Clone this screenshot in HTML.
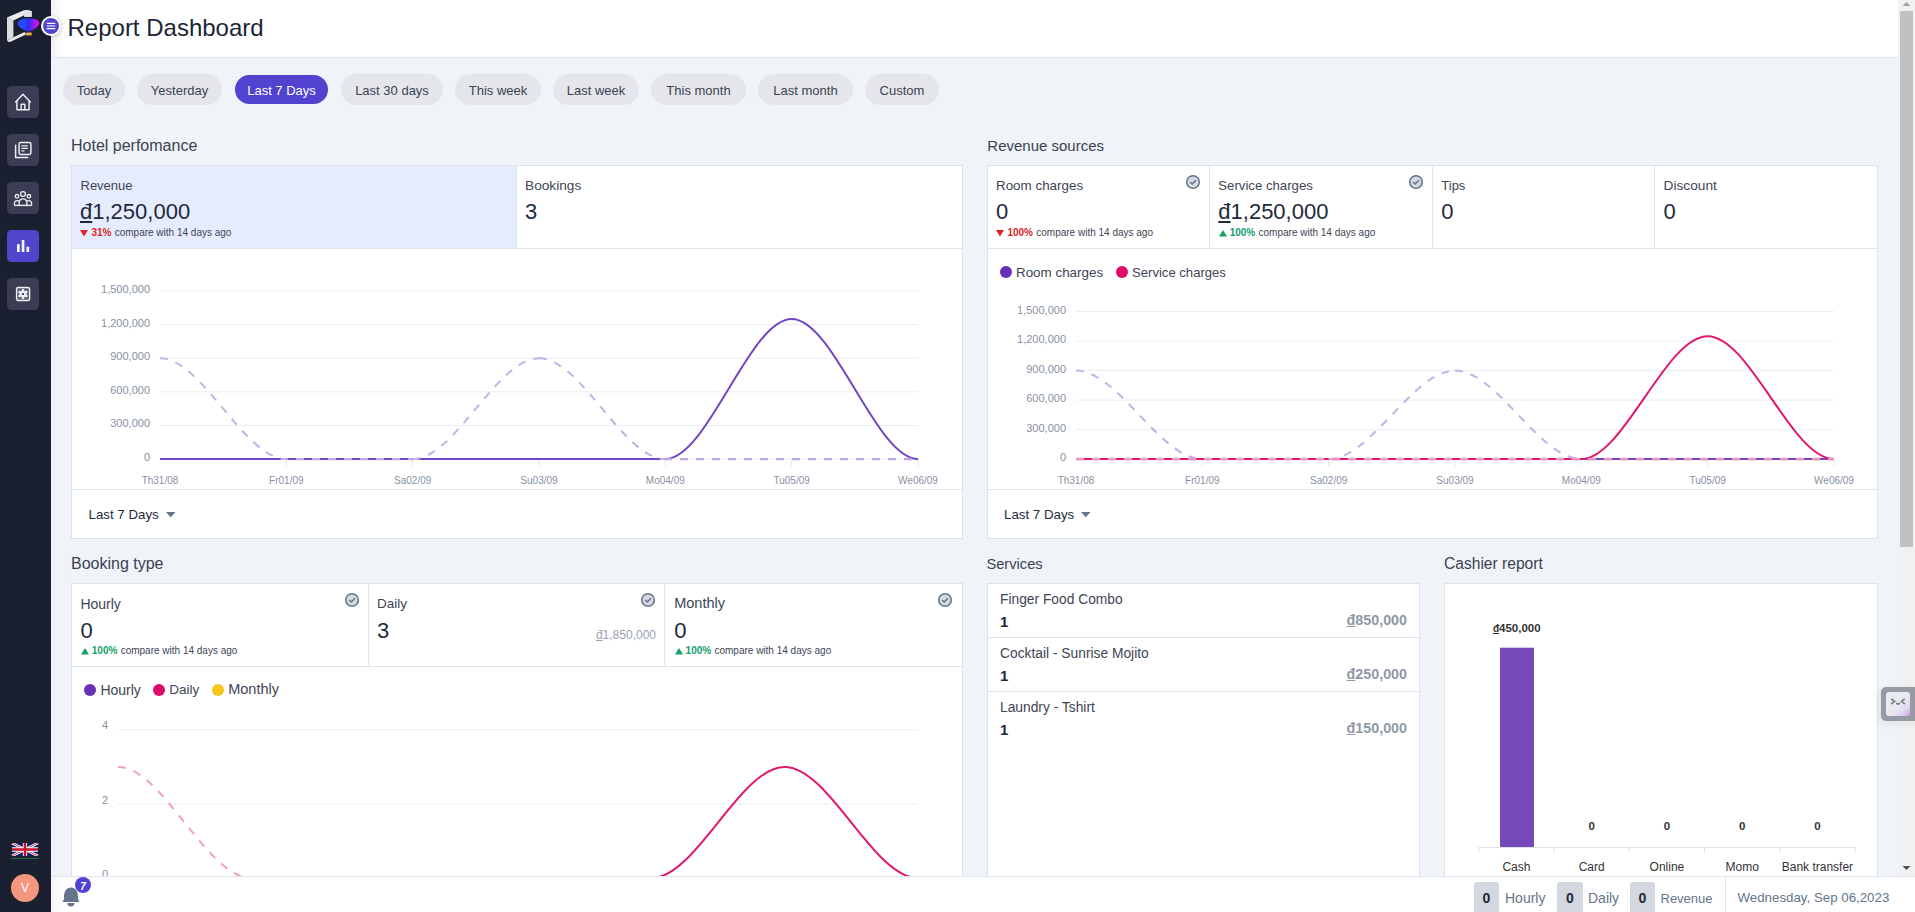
<!DOCTYPE html><html><head><meta charset="utf-8"><style>
*{box-sizing:border-box;margin:0;padding:0}
html,body{width:1915px;height:912px;overflow:hidden;background:#f0f3f8;font-family:"Liberation Sans",sans-serif;color:#374151}
.a{position:absolute}
#sb{left:0;top:0;width:51px;height:912px;background:#1b2030}
.nb{position:absolute;left:7px;width:32px;height:32px;border-radius:4.5px;background:#3b3d54}
.nb.act{background:#5144cd}
.nb svg{position:absolute;left:0;top:0}
#hd{left:51px;top:0;width:1847px;height:58px;background:#fff;border-bottom:1px solid #dfe5ee}
#title{left:68px;top:13px;font-size:24px;color:#1d2636;white-space:nowrap}
.pill{position:absolute;top:74px;height:31px;border-radius:16px;background:#e4e6eb;color:#3b4351;font-size:13px;line-height:33px;text-align:center;white-space:nowrap}
.pill.act{background:#5143cf;color:#fff;top:75px;height:29px;line-height:31px}
.st{position:absolute;font-size:16px;color:#3a4252;white-space:nowrap}
.card{position:absolute;background:#fff;border:1px solid #dde3ee}
.cell{position:absolute;top:0;height:83px;border-right:1px solid #dde3ee}
.lbl{position:absolute;font-size:13.5px;color:#3d4555;white-space:nowrap}
.val{position:absolute;font-size:22px;color:#1e293b;white-space:nowrap}
.cmp{position:absolute;font-size:10px;color:#3d4555;white-space:nowrap}
.cmp b.r{color:#dc2626}
.cmp b.g{color:#13a067}
.chk{position:absolute;width:14px;height:14px}
#ft{left:51px;top:876px;width:1864px;height:36px;background:#fff;border-top:1px solid #dfe5ee}
#scr{left:1898px;top:0;width:17px;height:876px;background:#f1f1f1}
.t{position:absolute;line-height:1;white-space:nowrap}
u.d{text-decoration:underline;text-decoration-thickness:0.07em;text-underline-offset:0.1em;text-decoration-skip-ink:none}
</style></head><body>


<!-- SIDEBAR -->
<div id="sb" class="a">
 <!-- logo -->
 <svg class="a" style="left:0;top:0" width="51" height="50" viewBox="0 0 51 50">
  <defs>
   <linearGradient id="bal" x1="0" x2="1" y1="0" y2="0">
    <stop offset="0" stop-color="#3a3cff"/><stop offset="0.3" stop-color="#1f4cff"/><stop offset="0.5" stop-color="#2b2cf5"/><stop offset="0.72" stop-color="#8a1cf0"/><stop offset="1" stop-color="#f010f0"/>
   </linearGradient>
  </defs>
  <path d="M7 17.6 L13.4 20.6 L13.4 37.2 L7 40.2 Z" fill="#dcdcdf"/>
  <path d="M7 17.6 L24 10.2 Q28 9.6 31.6 11 L31.6 16.8 L24.2 16.8 L24.2 15.2 L13.4 20.6 Z" fill="#ececee"/>
  <path d="M24.2 11.5 L31.6 11 L31.6 16.8 L24.2 16.8 Z" fill="#e2e2e5"/>
  <path d="M7 40.2 L13.4 37.2 L24.6 32 L26 34.6 L10.5 41.8 Q8 42.6 7 40.2 Z" fill="#e8e8ea"/>
  <path d="M17.6 23.6 C17.6 19.8 23 18.6 28.5 18.6 C34.5 18.6 39.2 20 39.2 23.2 C39.2 26.2 33.5 30 28.5 31.6 C23.5 30.2 17.6 27 17.6 23.6 Z" fill="url(#bal)"/>
  <rect x="25.8" y="32.6" width="6" height="2.8" rx="0.8" fill="#f0a545"/>
 </svg>
 <!-- nav buttons -->
 <div class="nb" style="top:86px"><svg width="32" height="32" viewBox="0 0 32 32" fill="none" stroke="#eceef3" stroke-width="1.45" stroke-linejoin="round" stroke-linecap="round">
  <path d="M8.6 15.9 L16 8.3 L23.4 15.9"/><path d="M9.9 14.6 V23.5 Q9.9 23.7 10.2 23.7 H21.8 Q22.1 23.7 22.1 23.5 V14.6"/><path d="M14.2 23.6 V18.2 H17.8 V23.6"/></svg></div>
 <div class="nb" style="top:134px"><svg width="32" height="32" viewBox="0 0 32 32" fill="none" stroke="#eceef3" stroke-width="1.5" stroke-linecap="round">
  <path d="M8.6 11.3 V23.6 H20.7"/><rect x="12.1" y="8.4" width="11.8" height="12" rx="1.6"/><path d="M14.4 11.8 H20.8 M14.4 14.4 H20.8 M14.4 16.9 H17.4" stroke-width="1.25" stroke-linecap="butt"/></svg></div>
 <div class="nb" style="top:182px"><svg width="32" height="32" viewBox="0 0 32 32" fill="none" stroke="#eceef3" stroke-width="1.3">
  <circle cx="16" cy="12" r="2.4"/><circle cx="10" cy="14.3" r="1.8"/><circle cx="21.9" cy="14.3" r="1.8"/>
  <path d="M12.1 23 V21.5 Q12.1 16.9 16 16.9 Q19.9 16.9 19.9 21.5 V23"/><path d="M7.4 23.3 V22 Q7.4 18.6 10.2 18.6 Q11.6 18.6 12.3 19.5 M24.6 23.3 V22 Q24.6 18.6 21.8 18.6 Q20.4 18.6 19.7 19.5"/><path d="M7.3 23.4 H24.7" stroke-width="1.4"/></svg></div>
 <div class="nb act" style="top:230px"><svg width="32" height="32" viewBox="0 0 32 32" fill="#f4f4fb">
  <rect x="10" y="14.2" width="2.7" height="7.8"/><rect x="14.7" y="10" width="2.7" height="12"/><rect x="19.5" y="16.7" width="2.7" height="5.3"/></svg></div>
 <div class="nb" style="top:278px"><svg width="32" height="32" viewBox="0 0 32 32">
  <rect x="9.6" y="9.5" width="13" height="13" rx="1.5" fill="rgba(255,255,255,0.17)" stroke="#eceef3" stroke-width="1.4"/>
  <g fill="#eceef3"><circle cx="16" cy="16" r="3.6"/><rect x="14.9" y="10.9" width="2.2" height="3" rx="0.4" transform="rotate(0 16 16)"/><rect x="14.9" y="10.9" width="2.2" height="3" rx="0.4" transform="rotate(60 16 16)"/><rect x="14.9" y="10.9" width="2.2" height="3" rx="0.4" transform="rotate(120 16 16)"/><rect x="14.9" y="10.9" width="2.2" height="3" rx="0.4" transform="rotate(180 16 16)"/><rect x="14.9" y="10.9" width="2.2" height="3" rx="0.4" transform="rotate(240 16 16)"/><rect x="14.9" y="10.9" width="2.2" height="3" rx="0.4" transform="rotate(300 16 16)"/></g><circle cx="16" cy="16" r="1.1" fill="#1b2030"/></svg></div>
 <!-- flag -->
 <svg class="a" style="left:11px;top:843px" width="28" height="13" viewBox="0 0 60 30">
  <rect width="60" height="30" fill="#012169"/>
  <path d="M0 0 L60 30 M60 0 L0 30" stroke="#fff" stroke-width="6"/>
  <path d="M0 0 L60 30 M60 0 L0 30" stroke="#C8102E" stroke-width="2"/>
  <path d="M30 0 V30 M0 15 H60" stroke="#fff" stroke-width="10"/>
  <path d="M30 0 V30 M0 15 H60" stroke="#C8102E" stroke-width="6"/>
 </svg>
 <div class="a" style="left:11px;top:858px;width:28px;height:1px;background:#1f6f3a"></div>
 <!-- avatar -->
 <div class="a" style="left:11px;top:874px;width:28px;height:28px;border-radius:50%;background:#f5977f;color:#fff;font-size:12px;line-height:28px;text-align:center">V</div>
</div>
<!-- menu toggle -->
<div class="a" style="z-index:5;left:41px;top:16px;width:20px;height:20px;border-radius:50%;background:#5144cd;border:2px solid #fff;box-shadow:0 1px 4px rgba(0,0,0,.25)">
 <svg class="a" style="left:0;top:0" width="16" height="16" viewBox="0 0 16 16" stroke="#fff" stroke-width="1.1"><path d="M3.7 5.4 H12.3 M3.7 8 H12.3 M3.7 10.6 H12.3"/></svg>
</div>


<div id="hd" class="a"></div>
<div class="a" style="left:51px;top:0;width:14px;height:57px;background:linear-gradient(90deg,rgba(0,0,0,.05),rgba(0,0,0,0))"></div>
<div class="t" style="left:67.50px;top:16.40px;font-size:24.00px;color:#1d2636;">Report Dashboard</div>
<div class="pill" style="left:63px;width:62px">Today</div>
<div class="pill" style="left:137px;width:85px">Yesterday</div>
<div class="pill act" style="left:235px;width:93px">Last 7 Days</div>
<div class="pill" style="left:341px;width:102px">Last 30 days</div>
<div class="pill" style="left:455px;width:86px">This week</div>
<div class="pill" style="left:553px;width:86px">Last week</div>
<div class="pill" style="left:651px;width:95px">This month</div>
<div class="pill" style="left:758px;width:95px">Last month</div>
<div class="pill" style="left:865px;width:74px">Custom</div>
<div class="t" style="left:71.00px;top:138.40px;font-size:16.00px;color:#3a4252;">Hotel perfomance</div>
<div class="t" style="left:987.30px;top:138.45px;font-size:15.00px;color:#3a4252;">Revenue sources</div>
<div class="t" style="left:71.00px;top:555.60px;font-size:16.00px;color:#3a4252;">Booking type</div>
<div class="t" style="left:986.40px;top:556.71px;font-size:14.70px;color:#3a4252;">Services</div>
<div class="t" style="left:1444.00px;top:555.94px;font-size:15.60px;color:#3a4252;">Cashier report</div>
<div class="card" style="left:71px;top:165px;width:892px;height:374px"></div>
<div class="card" style="left:987px;top:165px;width:891px;height:374px"></div>
<div class="card" style="left:71px;top:583px;width:892px;height:417px"></div>
<div class="card" style="left:987px;top:583px;width:433px;height:417px"></div>
<div class="card" style="left:1444px;top:583px;width:434px;height:417px"></div>
<div class="a" style="left:72.00px;top:166.00px;width:444.00px;height:82.00px;background:#e6ecfd;"></div>
<div class="a" style="left:516.00px;top:166.00px;width:1.00px;height:82.00px;background:#dde3ee;"></div>
<div class="a" style="left:72.00px;top:248.00px;width:890.00px;height:1.00px;background:#dde3ee;"></div>
<div class="t" style="left:80.50px;top:179.35px;font-size:13.00px;color:#3d4555;">Revenue</div>
<div class="t" style="left:80.00px;top:201.10px;font-size:22.00px;color:#1e293b;"><u class=d>đ</u>1,250,000</div>
<svg class="a" style="left:80.3px;top:229.7px" width="8" height="7" viewBox="0 0 8 7"><path d="M0 0 L8 0 L4 6.5 Z" fill="#dc2626"/></svg>
<div class="t" style="left:91.4px;top:228.00px;font-size:10px;color:#3d4555"><b style="color:#dc2626">31%</b> <span style="margin-left:0.5px">compare with 14 days ago</span></div>
<div class="t" style="left:525.00px;top:178.75px;font-size:13.70px;color:#3d4555;">Bookings</div>
<div class="t" style="left:525.00px;top:201.30px;font-size:22.00px;color:#1e293b;">3</div>
<div class="a" style="left:72.00px;top:489.00px;width:890.00px;height:1.00px;background:#dde3ee;"></div>
<div class="t" style="left:88.50px;top:507.69px;font-size:13.30px;color:#1e293b;">Last 7 Days</div>
<svg class="a" style="left:165.8px;top:511.8px" width="10" height="6" viewBox="0 0 10 6"><path d="M0 0 H9.5 L4.75 5.2 Z" fill="#64748b"/></svg>
<div class="a" style="left:1209.00px;top:166.00px;width:1.00px;height:82.00px;background:#dde3ee;"></div>
<div class="a" style="left:1432.00px;top:166.00px;width:1.00px;height:82.00px;background:#dde3ee;"></div>
<div class="a" style="left:1654.00px;top:166.00px;width:1.00px;height:82.00px;background:#dde3ee;"></div>
<div class="a" style="left:988.00px;top:248.00px;width:889.00px;height:1.00px;background:#dde3ee;"></div>
<div class="t" style="left:996.00px;top:178.81px;font-size:13.40px;color:#3d4555;">Room charges</div>
<div class="t" style="left:996.00px;top:200.90px;font-size:22.00px;color:#1e293b;">0</div>
<svg class="a" style="left:996.3px;top:229.7px" width="8" height="7" viewBox="0 0 8 7"><path d="M0 0 L8 0 L4 6.5 Z" fill="#dc2626"/></svg>
<div class="t" style="left:1007.4px;top:228.00px;font-size:10px;color:#3d4555"><b style="color:#dc2626">100%</b> <span style="margin-left:0.5px">compare with 14 days ago</span></div>
<svg class="a" style="left:1185.0px;top:174.0px" width="16" height="16" viewBox="0 0 16 16"><circle cx="8" cy="8" r="6.3" fill="#d3d8e1" stroke="#64728a" stroke-width="1.5"/><path d="M5.2 8.1 L7.2 10.1 L10.9 6.2" fill="none" stroke="#64728a" stroke-width="1.4"/></svg>
<div class="t" style="left:1218.30px;top:178.98px;font-size:13.20px;color:#3d4555;">Service charges</div>
<div class="t" style="left:1218.30px;top:200.90px;font-size:22.00px;color:#1e293b;"><u class=d>đ</u>1,250,000</div>
<svg class="a" style="left:1218.6px;top:229.7px" width="8" height="7" viewBox="0 0 8 7"><path d="M0 6.5 L4 0 L8 6.5 Z" fill="#13a067"/></svg>
<div class="t" style="left:1229.7px;top:228.00px;font-size:10px;color:#3d4555"><b style="color:#13a067">100%</b> <span style="margin-left:0.5px">compare with 14 days ago</span></div>
<svg class="a" style="left:1408.0px;top:174.0px" width="16" height="16" viewBox="0 0 16 16"><circle cx="8" cy="8" r="6.3" fill="#d3d8e1" stroke="#64728a" stroke-width="1.5"/><path d="M5.2 8.1 L7.2 10.1 L10.9 6.2" fill="none" stroke="#64728a" stroke-width="1.4"/></svg>
<div class="t" style="left:1441.30px;top:179.15px;font-size:13.00px;color:#3d4555;">Tips</div>
<div class="t" style="left:1441.30px;top:200.90px;font-size:22.00px;color:#1e293b;">0</div>
<div class="t" style="left:1663.60px;top:178.55px;font-size:13.70px;color:#3d4555;">Discount</div>
<div class="t" style="left:1663.60px;top:200.90px;font-size:22.00px;color:#1e293b;">0</div>
<div class="a" style="left:1000.0px;top:266.2px;width:12px;height:12px;border-radius:50%;background:#6a2fb8"></div>
<div class="t" style="left:1016.00px;top:265.61px;font-size:13.40px;color:#3d4555;">Room charges</div>
<div class="a" style="left:1115.7px;top:266.2px;width:12px;height:12px;border-radius:50%;background:#dd0b6a"></div>
<div class="t" style="left:1132.00px;top:265.87px;font-size:13.10px;color:#3d4555;">Service charges</div>
<div class="a" style="left:988.00px;top:489.00px;width:889.00px;height:1.00px;background:#dde3ee;"></div>
<div class="t" style="left:1004.00px;top:507.69px;font-size:13.30px;color:#1e293b;">Last 7 Days</div>
<svg class="a" style="left:1081.3px;top:511.8px" width="10" height="6" viewBox="0 0 10 6"><path d="M0 0 H9.5 L4.75 5.2 Z" fill="#64748b"/></svg>
<div class="a" style="left:368.00px;top:584.00px;width:1.00px;height:82.00px;background:#dde3ee;"></div>
<div class="a" style="left:664.00px;top:584.00px;width:1.00px;height:82.00px;background:#dde3ee;"></div>
<div class="a" style="left:72.00px;top:666.00px;width:890.00px;height:1.00px;background:#dde3ee;"></div>
<div class="t" style="left:80.40px;top:596.50px;font-size:14.00px;color:#3d4555;">Hourly</div>
<div class="t" style="left:80.40px;top:619.50px;font-size:22.00px;color:#1e293b;">0</div>
<svg class="a" style="left:80.7px;top:648.0px" width="8" height="7" viewBox="0 0 8 7"><path d="M0 6.5 L4 0 L8 6.5 Z" fill="#13a067"/></svg>
<div class="t" style="left:91.8px;top:646.30px;font-size:10px;color:#3d4555"><b style="color:#13a067">100%</b> <span style="margin-left:0.5px">compare with 14 days ago</span></div>
<svg class="a" style="left:344.0px;top:592.0px" width="16" height="16" viewBox="0 0 16 16"><circle cx="8" cy="8" r="6.3" fill="#d3d8e1" stroke="#64728a" stroke-width="1.5"/><path d="M5.2 8.1 L7.2 10.1 L10.9 6.2" fill="none" stroke="#64728a" stroke-width="1.4"/></svg>
<div class="t" style="left:377.00px;top:596.92px;font-size:13.50px;color:#3d4555;">Daily</div>
<div class="t" style="left:377.00px;top:619.50px;font-size:22.00px;color:#1e293b;">3</div>
<div class="t" style="right:1259.00px;top:629.00px;font-size:12.00px;color:#9aa2b1;"><u class=d>đ</u>1,850,000</div>
<svg class="a" style="left:640.0px;top:592.0px" width="16" height="16" viewBox="0 0 16 16"><circle cx="8" cy="8" r="6.3" fill="#d3d8e1" stroke="#64728a" stroke-width="1.5"/><path d="M5.2 8.1 L7.2 10.1 L10.9 6.2" fill="none" stroke="#64728a" stroke-width="1.4"/></svg>
<div class="t" style="left:674.20px;top:596.07px;font-size:14.50px;color:#3d4555;">Monthly</div>
<div class="t" style="left:674.20px;top:619.50px;font-size:22.00px;color:#1e293b;">0</div>
<svg class="a" style="left:674.5px;top:648.0px" width="8" height="7" viewBox="0 0 8 7"><path d="M0 6.5 L4 0 L8 6.5 Z" fill="#13a067"/></svg>
<div class="t" style="left:685.6px;top:646.30px;font-size:10px;color:#3d4555"><b style="color:#13a067">100%</b> <span style="margin-left:0.5px">compare with 14 days ago</span></div>
<svg class="a" style="left:937.0px;top:592.0px" width="16" height="16" viewBox="0 0 16 16"><circle cx="8" cy="8" r="6.3" fill="#d3d8e1" stroke="#64728a" stroke-width="1.5"/><path d="M5.2 8.1 L7.2 10.1 L10.9 6.2" fill="none" stroke="#64728a" stroke-width="1.4"/></svg>
<div class="a" style="left:83.8px;top:684.0px;width:12px;height:12px;border-radius:50%;background:#6a2fb8"></div>
<div class="t" style="left:100.40px;top:682.90px;font-size:14.00px;color:#3d4555;">Hourly</div>
<div class="a" style="left:152.5px;top:684.0px;width:12px;height:12px;border-radius:50%;background:#dd0b6a"></div>
<div class="t" style="left:169.30px;top:683.32px;font-size:13.50px;color:#3d4555;">Daily</div>
<div class="a" style="left:211.8px;top:684.0px;width:12px;height:12px;border-radius:50%;background:#f5c518"></div>
<div class="t" style="left:228.20px;top:682.47px;font-size:14.50px;color:#3d4555;">Monthly</div>
<div class="t" style="left:1000.00px;top:593.07px;font-size:13.80px;color:#3d4555;">Finger Food Combo</div>
<div class="t" style="left:1000.00px;top:614.15px;font-size:15.00px;color:#1e293b;font-weight:bold;">1</div>
<div class="t" style="right:508.00px;top:613.35px;font-size:14.30px;color:#8f98a8;font-weight:bold;"><u class=d>đ</u>850,000</div>
<div class="a" style="left:988.00px;top:637.00px;width:431.00px;height:1.00px;background:#dde3ee;"></div>
<div class="t" style="left:1000.00px;top:647.07px;font-size:13.80px;color:#3d4555;">Cocktail - Sunrise Mojito</div>
<div class="t" style="left:1000.00px;top:668.15px;font-size:15.00px;color:#1e293b;font-weight:bold;">1</div>
<div class="t" style="right:508.00px;top:667.35px;font-size:14.30px;color:#8f98a8;font-weight:bold;"><u class=d>đ</u>250,000</div>
<div class="a" style="left:988.00px;top:691.00px;width:431.00px;height:1.00px;background:#dde3ee;"></div>
<div class="t" style="left:1000.00px;top:701.07px;font-size:13.80px;color:#3d4555;">Laundry - Tshirt</div>
<div class="t" style="left:1000.00px;top:722.15px;font-size:15.00px;color:#1e293b;font-weight:bold;">1</div>
<div class="t" style="right:508.00px;top:721.35px;font-size:14.30px;color:#8f98a8;font-weight:bold;"><u class=d>đ</u>150,000</div>
<svg class="a" style="left:0;top:0" width="1915" height="912" viewBox="0 0 1915 912" font-family="Liberation Sans, sans-serif"><line x1="160.0" y1="459.10" x2="918.0" y2="459.10" stroke="#e9edf3" stroke-width="1"/><text x="150.0" y="461.00" font-size="11" fill="#8891a1" text-anchor="end">0</text><line x1="160.0" y1="425.48" x2="918.0" y2="425.48" stroke="#e9edf3" stroke-width="1"/><text x="150.0" y="427.38" font-size="11" fill="#8891a1" text-anchor="end">300,000</text><line x1="160.0" y1="391.86" x2="918.0" y2="391.86" stroke="#e9edf3" stroke-width="1"/><text x="150.0" y="393.76" font-size="11" fill="#8891a1" text-anchor="end">600,000</text><line x1="160.0" y1="358.24" x2="918.0" y2="358.24" stroke="#e9edf3" stroke-width="1"/><text x="150.0" y="360.14" font-size="11" fill="#8891a1" text-anchor="end">900,000</text><line x1="160.0" y1="324.62" x2="918.0" y2="324.62" stroke="#e9edf3" stroke-width="1"/><text x="150.0" y="326.52" font-size="11" fill="#8891a1" text-anchor="end">1,200,000</text><line x1="160.0" y1="291.00" x2="918.0" y2="291.00" stroke="#e9edf3" stroke-width="1"/><text x="150.0" y="292.90" font-size="11" fill="#8891a1" text-anchor="end">1,500,000</text><text x="160.00" y="483.60" font-size="10" fill="#8891a1" text-anchor="middle">Th31/08</text><line x1="286.33" y1="459.1" x2="286.33" y2="466.1" stroke="#e2e6ec" stroke-width="1"/><text x="286.33" y="483.60" font-size="10" fill="#8891a1" text-anchor="middle">Fr01/09</text><line x1="412.67" y1="459.1" x2="412.67" y2="466.1" stroke="#e2e6ec" stroke-width="1"/><text x="412.67" y="483.60" font-size="10" fill="#8891a1" text-anchor="middle">Sa02/09</text><line x1="539.00" y1="459.1" x2="539.00" y2="466.1" stroke="#e2e6ec" stroke-width="1"/><text x="539.00" y="483.60" font-size="10" fill="#8891a1" text-anchor="middle">Su03/09</text><line x1="665.33" y1="459.1" x2="665.33" y2="466.1" stroke="#e2e6ec" stroke-width="1"/><text x="665.33" y="483.60" font-size="10" fill="#8891a1" text-anchor="middle">Mo04/09</text><line x1="791.67" y1="459.1" x2="791.67" y2="466.1" stroke="#e2e6ec" stroke-width="1"/><text x="791.67" y="483.60" font-size="10" fill="#8891a1" text-anchor="middle">Tu05/09</text><line x1="918.00" y1="459.1" x2="918.00" y2="466.1" stroke="#e2e6ec" stroke-width="1"/><text x="918.00" y="483.60" font-size="10" fill="#8891a1" text-anchor="middle">We06/09</text><path d="M160.00 459.10 C202.11 459.10 244.22 459.10 286.33 459.10 C328.44 459.10 370.56 459.10 412.67 459.10 C454.78 459.10 496.89 459.10 539.00 459.10 C581.11 459.10 623.22 459.10 665.33 459.10 C707.44 459.10 749.56 319.02 791.67 319.02 C833.78 319.02 875.89 459.10 918.00 459.10" fill="none" stroke="#7246c2" stroke-width="2"/><path d="M160.00 358.24 C202.11 358.24 244.22 459.10 286.33 459.10" fill="none" stroke="#c5b0e8" stroke-width="2" stroke-dasharray="8 8"/><path d="M286.33 459.10 H412.67" fill="none" stroke="#bca5e4" stroke-width="2.4" stroke-dasharray="8 8" stroke-dashoffset="6.33"/><path d="M412.67 459.10 C454.78 459.10 496.89 358.24 539.00 358.24" fill="none" stroke="#c5b0e8" stroke-width="2" stroke-dasharray="8 8"/><path d="M539.00 358.24 C581.11 358.24 623.22 459.10 665.33 459.10" fill="none" stroke="#c5b0e8" stroke-width="2" stroke-dasharray="8 8"/><path d="M665.33 459.10 H791.67" fill="none" stroke="#bca5e4" stroke-width="2.4" stroke-dasharray="8 8" stroke-dashoffset="1.33"/><path d="M791.67 459.10 H918.00" fill="none" stroke="#bca5e4" stroke-width="2.4" stroke-dasharray="8 8" stroke-dashoffset="15.67"/></svg>
<svg class="a" style="left:0;top:0" width="1915" height="912" viewBox="0 0 1915 912" font-family="Liberation Sans, sans-serif"><line x1="1076.0" y1="459.10" x2="1834.0" y2="459.10" stroke="#e9edf3" stroke-width="1"/><text x="1066.0" y="461.00" font-size="11" fill="#8891a1" text-anchor="end">0</text><line x1="1076.0" y1="429.60" x2="1834.0" y2="429.60" stroke="#e9edf3" stroke-width="1"/><text x="1066.0" y="431.50" font-size="11" fill="#8891a1" text-anchor="end">300,000</text><line x1="1076.0" y1="400.10" x2="1834.0" y2="400.10" stroke="#e9edf3" stroke-width="1"/><text x="1066.0" y="402.00" font-size="11" fill="#8891a1" text-anchor="end">600,000</text><line x1="1076.0" y1="370.60" x2="1834.0" y2="370.60" stroke="#e9edf3" stroke-width="1"/><text x="1066.0" y="372.50" font-size="11" fill="#8891a1" text-anchor="end">900,000</text><line x1="1076.0" y1="341.10" x2="1834.0" y2="341.10" stroke="#e9edf3" stroke-width="1"/><text x="1066.0" y="343.00" font-size="11" fill="#8891a1" text-anchor="end">1,200,000</text><line x1="1076.0" y1="311.60" x2="1834.0" y2="311.60" stroke="#e9edf3" stroke-width="1"/><text x="1066.0" y="313.50" font-size="11" fill="#8891a1" text-anchor="end">1,500,000</text><text x="1076.00" y="483.60" font-size="10" fill="#8891a1" text-anchor="middle">Th31/08</text><line x1="1202.33" y1="459.1" x2="1202.33" y2="466.1" stroke="#e2e6ec" stroke-width="1"/><text x="1202.33" y="483.60" font-size="10" fill="#8891a1" text-anchor="middle">Fr01/09</text><line x1="1328.67" y1="459.1" x2="1328.67" y2="466.1" stroke="#e2e6ec" stroke-width="1"/><text x="1328.67" y="483.60" font-size="10" fill="#8891a1" text-anchor="middle">Sa02/09</text><line x1="1455.00" y1="459.1" x2="1455.00" y2="466.1" stroke="#e2e6ec" stroke-width="1"/><text x="1455.00" y="483.60" font-size="10" fill="#8891a1" text-anchor="middle">Su03/09</text><line x1="1581.33" y1="459.1" x2="1581.33" y2="466.1" stroke="#e2e6ec" stroke-width="1"/><text x="1581.33" y="483.60" font-size="10" fill="#8891a1" text-anchor="middle">Mo04/09</text><line x1="1707.67" y1="459.1" x2="1707.67" y2="466.1" stroke="#e2e6ec" stroke-width="1"/><text x="1707.67" y="483.60" font-size="10" fill="#8891a1" text-anchor="middle">Tu05/09</text><line x1="1834.00" y1="459.1" x2="1834.00" y2="466.1" stroke="#e2e6ec" stroke-width="1"/><text x="1834.00" y="483.60" font-size="10" fill="#8891a1" text-anchor="middle">We06/09</text><path d="M1076.0 459.10 H1834.0" fill="none" stroke="#7246c2" stroke-width="2"/><path d="M1076.00 459.10 C1118.11 459.10 1160.22 459.10 1202.33 459.10 C1244.44 459.10 1286.56 459.10 1328.67 459.10 C1370.78 459.10 1412.89 459.10 1455.00 459.10 C1497.11 459.10 1539.22 459.10 1581.33 459.10 C1623.44 459.10 1665.56 336.18 1707.67 336.18 C1749.78 336.18 1791.89 459.10 1834.00 459.10" fill="none" stroke="#e0186e" stroke-width="2"/><path d="M1076.00 370.60 C1118.11 370.60 1160.22 459.10 1202.33 459.10" fill="none" stroke="#c5b0e8" stroke-width="2" stroke-dasharray="8 8"/><path d="M1202.33 459.10 H1328.67" fill="none" stroke="#c5b0e8" stroke-width="2" stroke-dasharray="8 8" stroke-dashoffset="14.33"/><path d="M1328.67 459.10 C1370.78 459.10 1412.89 370.60 1455.00 370.60" fill="none" stroke="#c5b0e8" stroke-width="2" stroke-dasharray="8 8"/><path d="M1455.00 370.60 C1497.11 370.60 1539.22 459.10 1581.33 459.10" fill="none" stroke="#c5b0e8" stroke-width="2" stroke-dasharray="8 8"/><path d="M1581.33 459.10 H1707.67" fill="none" stroke="#c5b0e8" stroke-width="2" stroke-dasharray="8 8" stroke-dashoffset="9.33"/><path d="M1707.67 459.10 H1834.00" fill="none" stroke="#c5b0e8" stroke-width="2" stroke-dasharray="8 8" stroke-dashoffset="7.67"/><path d="M1076.0 459.10 H1834.0" fill="none" stroke="#e896bf" stroke-width="2.6" stroke-dasharray="8 8"/></svg>
<svg class="a" style="left:0;top:0" width="1915" height="912" viewBox="0 0 1915 912" font-family="Liberation Sans, sans-serif"><line x1="118.0" y1="878.20" x2="918.0" y2="878.20" stroke="#e9edf3" stroke-width="1"/><text x="108" y="877.70" font-size="11" fill="#8891a1" text-anchor="end">0</text><line x1="118.0" y1="804.00" x2="918.0" y2="804.00" stroke="#e9edf3" stroke-width="1"/><text x="108" y="803.50" font-size="11" fill="#8891a1" text-anchor="end">2</text><line x1="118.0" y1="729.80" x2="918.0" y2="729.80" stroke="#e9edf3" stroke-width="1"/><text x="108" y="729.30" font-size="11" fill="#8891a1" text-anchor="end">4</text><path d="M118.00 766.90 C162.44 766.90 206.89 878.20 251.33 878.20 C295.78 878.20 340.22 878.20 384.67 878.20 C429.11 878.20 473.56 878.20 518.00 878.20 C562.44 878.20 606.89 878.20 651.33 878.20 C695.78 878.20 740.22 878.20 784.67 878.20 C829.11 878.20 873.56 878.20 918.00 878.20" fill="none" stroke="#f0a0c4" stroke-width="2" stroke-dasharray="8 8"/><path d="M118.00 878.20 C162.44 878.20 206.89 878.20 251.33 878.20 C295.78 878.20 340.22 878.20 384.67 878.20 C429.11 878.20 473.56 878.20 518.00 878.20 C562.44 878.20 606.89 878.20 651.33 878.20 C695.78 878.20 740.22 766.90 784.67 766.90 C829.11 766.90 873.56 878.20 918.00 878.20" fill="none" stroke="#e0186e" stroke-width="2"/><rect x="1500" y="647.7" width="34" height="199.3" fill="#7649b8"/><line x1="1478.8" y1="847.5" x2="1855.1" y2="847.5" stroke="#dfe3e8" stroke-width="1"/><line x1="1478.80" y1="847.5" x2="1478.80" y2="853" stroke="#dfe3e8" stroke-width="1"/><line x1="1554.06" y1="847.5" x2="1554.06" y2="853" stroke="#dfe3e8" stroke-width="1"/><line x1="1629.32" y1="847.5" x2="1629.32" y2="853" stroke="#dfe3e8" stroke-width="1"/><line x1="1704.58" y1="847.5" x2="1704.58" y2="853" stroke="#dfe3e8" stroke-width="1"/><line x1="1779.84" y1="847.5" x2="1779.84" y2="853" stroke="#dfe3e8" stroke-width="1"/><line x1="1855.10" y1="847.5" x2="1855.10" y2="853" stroke="#dfe3e8" stroke-width="1"/><text x="1516.8" y="632" font-size="11.5" font-weight="bold" fill="#333" text-anchor="middle"><tspan style="text-decoration:underline;text-decoration-thickness:1px;text-underline-offset:1px;font-size:10px">đ</tspan>450,000</text><text x="1516.40" y="871" font-size="12" fill="#333" text-anchor="middle">Cash</text><text x="1591.66" y="871" font-size="12" fill="#333" text-anchor="middle">Card</text><text x="1591.66" y="830" font-size="11.5" font-weight="bold" fill="#333" text-anchor="middle">0</text><text x="1666.92" y="871" font-size="12" fill="#333" text-anchor="middle">Online</text><text x="1666.92" y="830" font-size="11.5" font-weight="bold" fill="#333" text-anchor="middle">0</text><text x="1742.18" y="871" font-size="12" fill="#333" text-anchor="middle">Momo</text><text x="1742.18" y="830" font-size="11.5" font-weight="bold" fill="#333" text-anchor="middle">0</text><text x="1817.44" y="871" font-size="12" fill="#333" text-anchor="middle">Bank transfer</text><text x="1817.44" y="830" font-size="11.5" font-weight="bold" fill="#333" text-anchor="middle">0</text></svg>
<!-- SCROLLBAR -->
<div id="scr" class="a"></div>
<div class="a" style="left:1900px;top:11px;width:13px;height:536px;background:#c1c1c1"></div>
<svg class="a" style="left:1898px;top:0" width="17" height="11" viewBox="0 0 17 11"><path d="M4.5 6 L8.5 2 L12.5 6 Z" fill="#a3a3a3"/></svg>
<svg class="a" style="left:1898px;top:862px" width="17" height="11" viewBox="0 0 17 11"><path d="M4.5 4 L12.5 4 L8.5 8 Z" fill="#505050"/></svg>
<!-- floating widget -->
<div class="a" style="left:1881px;top:687px;width:40px;height:34px;border-radius:5px;background:#979aa2;box-shadow:-2px 2px 8px rgba(0,0,0,.08)"></div>
<div class="a" style="left:1886px;top:692px;width:24px;height:24px;border-radius:3px;background:linear-gradient(135deg,#eceef2 0%,#e8e9ef 55%,#e2d2f0 80%,#cc9aee 100%)"></div>
<svg class="a" style="left:1886px;top:692px" width="24" height="24" viewBox="0 0 24 24" fill="none" stroke="#7b7f8a" stroke-width="1.7" stroke-linecap="round" stroke-linejoin="round"><path d="M5.6 7.3 L8.7 9.4 L5.6 11.6"/><path d="M18.4 7.3 L15.3 9.4 L18.4 11.6"/><path d="M10.8 11.4 Q12 12.9 13.3 11.4"/></svg>
<!-- FOOTER -->
<div id="ft" class="a"></div>
<div class="a" style="left:51px;top:877px;width:14px;height:35px;background:linear-gradient(90deg,rgba(0,0,0,.04),rgba(0,0,0,0))"></div>
<svg class="a" style="left:55px;top:872px" width="40" height="40" viewBox="0 0 40 40"><path d="M9 25.5 C9 19 11.5 15.6 16 15.6 C20.5 15.6 23 19 23 25.5 L23 27.6 L24.2 28.7 Q24.5 29.9 23.3 29.9 L8.7 29.9 Q7.5 29.9 7.8 28.7 L9 27.6 Z" fill="#64748b"/><path d="M12.3 31.1 H19.5 Q19.2 34.6 15.9 34.6 Q12.6 34.6 12.3 31.1 Z" fill="#64748b"/></svg>
<div class="a" style="left:75px;top:877px;width:16px;height:16px;border-radius:50%;background:#5143cf;color:#fff;font-size:10px;font-weight:bold;line-height:19px;text-align:center;font-style:italic">7</div>
<div class="a" style="left:1474px;top:882px;width:25px;height:32px;border-radius:3px;background:#d3d7df"></div>
<div class="a" style="left:1557px;top:882px;width:26px;height:32px;border-radius:3px;background:#d3d7df"></div>
<div class="a" style="left:1630px;top:882px;width:25px;height:32px;border-radius:3px;background:#d3d7df"></div>
<div class="t" style="left:1474px;top:891px;width:25px;text-align:center;font-size:14px;font-weight:bold;color:#1e293b">0</div>
<div class="t" style="left:1557px;top:891px;width:26px;text-align:center;font-size:14px;font-weight:bold;color:#1e293b">0</div>
<div class="t" style="left:1630px;top:891px;width:25px;text-align:center;font-size:14px;font-weight:bold;color:#1e293b">0</div>
<div class="t" style="left:1505px;top:891px;font-size:14px;color:#64748b">Hourly</div>
<div class="t" style="left:1588px;top:891px;font-size:14px;color:#64748b">Daily</div>
<div class="t" style="left:1660.5px;top:891.5px;font-size:13px;color:#64748b">Revenue</div>
<div class="a" style="left:1725px;top:877px;width:1px;height:35px;background:#dfe5ee"></div>
<div class="t" style="left:1737.5px;top:891px;font-size:13.3px;color:#64748b">Wednesday, Sep 06,2023</div>

</body></html>
